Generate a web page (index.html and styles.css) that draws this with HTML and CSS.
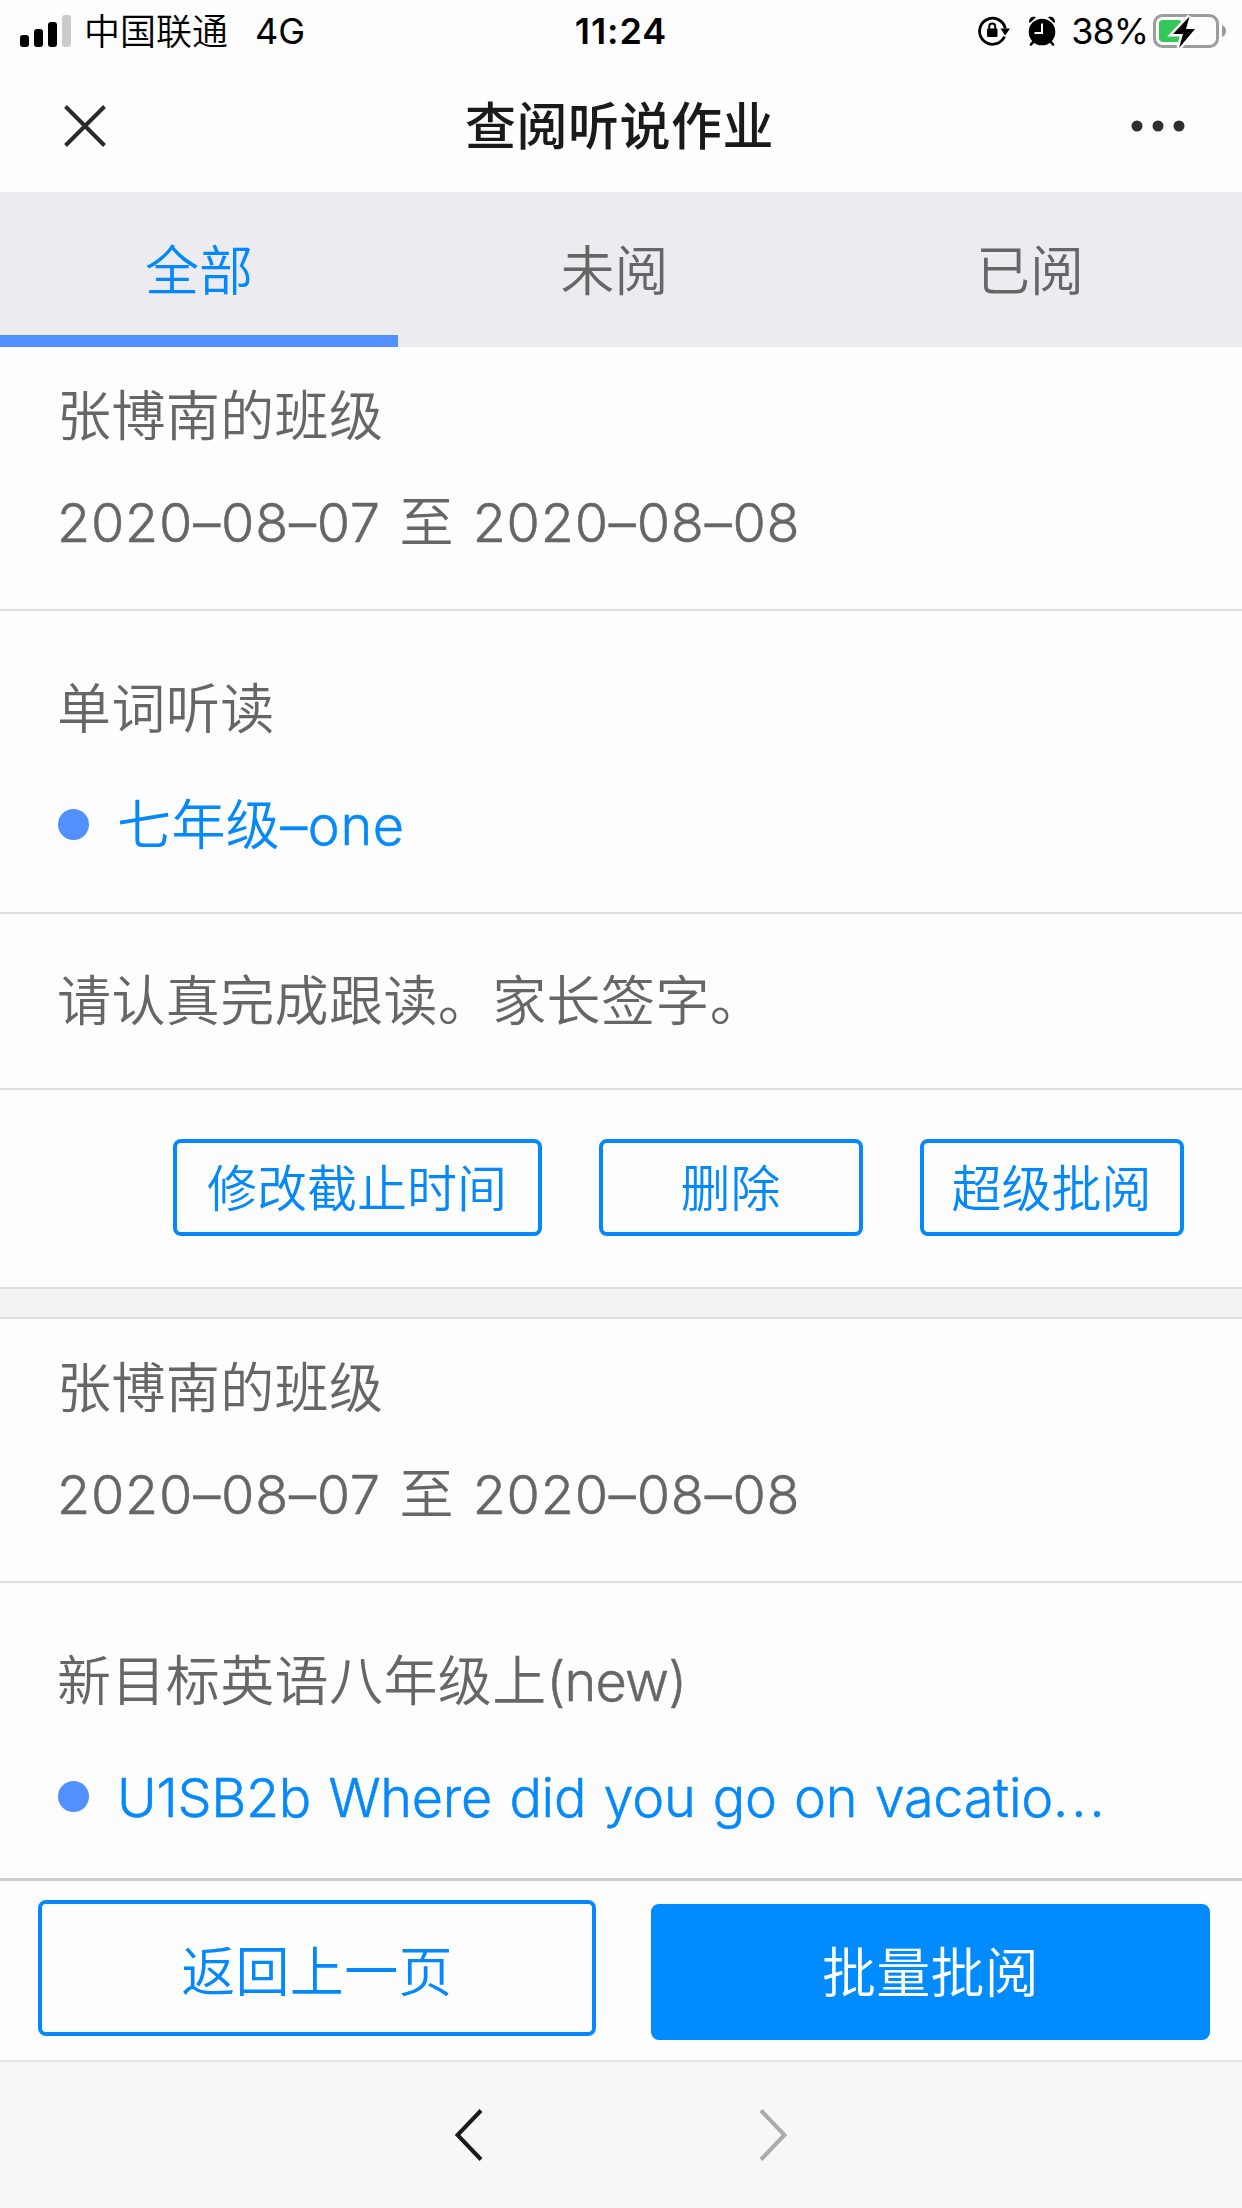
FILE: index.html
```html
<!DOCTYPE html>
<html lang="zh-CN">
<head>
<meta charset="utf-8">
<title>查阅听说作业</title>
<link rel="stylesheet" href="styles.css">
</head>
<body>
<div class="screen">
  <header class="status-bar">
    <div class="status-left">
      <svg class="signal" width="51" height="32" viewBox="0 0 51 32">
        <rect x="0" y="20" width="9" height="12" rx="3"/>
        <rect x="14" y="14" width="9" height="18" rx="3"/>
        <rect x="28" y="7" width="9" height="25" rx="3"/>
        <rect x="42" y="0" width="9" height="32" rx="3" fill="#cbcbcb"/>
      </svg>
      <span class="carrier">中国联通</span>
      <span class="network">4G</span>
    </div>
    <div class="clock">11:24</div>
    <div class="status-right">
      <svg class="rotation-lock" width="32" height="30" viewBox="0 0 32 30">
        <path d="M26.5 20.5A13 13 0 1 1 27.3 12.5" fill="none" stroke="#000" stroke-width="2.8"/>
        <path d="M22.5 12.5H32L27.2 19.5Z"/>
        <rect x="9" y="12.5" width="10.5" height="8.5" rx="1"/>
        <path d="M11.2 13v-2.4a3 3 0 0 1 6 0V13" fill="none" stroke="#000" stroke-width="2"/>
      </svg>
      <svg class="alarm" width="28" height="30" viewBox="0 0 28 30">
        <circle cx="14" cy="16" r="13.3"/>
        <path d="M1 6.5C1 2 4 0 8 1.2L2 6.8ZM27 6.5C27 2 24 0 20 1.2L26 6.8Z"/>
        <path d="M5.5 25.5L3 28.5M22.5 25.5L25 28.5" stroke="#000" stroke-width="2.6" stroke-linecap="round"/>
        <path d="M14 7.5V17H6.5" fill="none" stroke="#fdfdfd" stroke-width="2"/>
      </svg>
      <span class="percent">38%</span>
      <svg class="battery" width="73" height="38" viewBox="0 0 73 38">
        <rect x="1.5" y="3.5" width="63" height="31" rx="8" fill="none" stroke="#9c9c9c" stroke-width="3"/>
        <path d="M69 13Q73 14.500 73 19T69 25Z" fill="#9c9c9c"/>
        <rect x="6" y="8" width="23" height="22" rx="4" fill="#34c759"/>
        <path d="M36.500 4.500L20 22H30L26 36L42 17H33Z" fill="#000" stroke="#fdfdfd" stroke-width="5" paint-order="stroke"/>
      </svg>
    </div>
  </header>

  <nav class="title-bar">
    <svg class="close" width="42" height="42" viewBox="0 0 42 42">
      <path d="M1.500 1.500L40.500 40.500M40.500 1.500L1.500 40.500" stroke="#2b2b2b" stroke-width="4"/>
    </svg>
    <h1 class="title">查阅听说作业</h1>
    <svg class="more" width="54" height="12" viewBox="0 0 54 12">
      <circle cx="6" cy="6" r="5.500"/><circle cx="27" cy="6" r="5.500"/><circle cx="48" cy="6" r="5.500"/>
    </svg>
  </nav>

  <div class="tabs">
    <div class="tab tab-active">全部</div>
    <div class="tab">未阅</div>
    <div class="tab">已阅</div>
  </div>

  <main class="list">
    <article class="card">
      <section class="summary">
        <p class="line">张博南的班级</p>
        <p class="line dates">2020–08–07 <span class="han">至</span> 2020–08–08</p>
      </section>
      <section class="work">
        <p class="line">单词听读</p>
        <p class="line item"><span class="dot"></span><span class="link">七年级<span class="latin">–one</span></span></p>
      </section>
      <section class="note">
        <p class="line">请认真完成跟读。家长签字。</p>
      </section>
      <section class="actions">
        <button class="btn btn-wide">修改截止时间</button>
        <button class="btn">删除</button>
        <button class="btn">超级批阅</button>
      </section>
    </article>

    <article class="card">
      <section class="summary">
        <p class="line">张博南的班级</p>
        <p class="line dates">2020–08–07 <span class="han">至</span> 2020–08–08</p>
      </section>
      <section class="work">
        <p class="line">新目标英语八年级上<span class="latin tight">(new)</span></p>
        <p class="line item"><span class="dot"></span><span class="link unit">U1SB2b Where did you go on vacatio<span class="ellipsis">...</span></span></p>
      </section>
    </article>
  </main>

  <footer class="bottom-bar">
    <button class="big-btn outline">返回上一页</button>
    <button class="big-btn solid">批量批阅</button>
  </footer>

  <div class="browser-bar">
    <svg width="28" height="52" viewBox="0 0 28 52"><path d="M26 1.500L2.500 26L26 50.500" fill="none" stroke="#1a1a1a" stroke-width="4"/></svg>
    <svg width="28" height="52" viewBox="0 0 28 52"><path d="M2 1.500L25.500 26L2 50.500" fill="none" stroke="#aaaaaa" stroke-width="4"/></svg>
  </div>
</div>
</body>
</html>
```
FILE: styles.css
```css
* { box-sizing: border-box; }

body {
  margin: 0;
  background: #fdfdfd;
  color: #666;
  font-family: Inter, "Noto Sans CJK SC", sans-serif;
  font-size: 54px;
  font-weight: 350;
}

p, h1 { margin: 0; }

svg { display: block; flex: none; }

button {
  padding: 0;
  font: inherit;
  background: none;
  border: 4px solid #0589fa;
  border-radius: 8px;
  color: #0589fa;
}

.screen {
  width: 1242px;
  height: 2208px;
  display: flex;
  flex-direction: column;
  overflow: hidden;
}

/* Status bar */
.status-bar {
  height: 60px;
  display: grid;
  grid-template-columns: 1fr auto 1fr;
  align-items: center;
  padding: 2px 16px 0 20px;
  color: #000;
  font-size: 36px;
  line-height: 56px;
}

.status-left, .status-right { display: flex; align-items: center; }
.status-right { justify-content: flex-end; }
.signal { margin-right: 13px; }
.carrier { margin-right: 27px; position: relative; top: 1px; }
.network, .percent { font-weight: 400; }
.clock { font-weight: 600; letter-spacing: 0.9px; padding-right: 4px; }
.rotation-lock { margin-right: 18px; }
.alarm { margin-right: 15px; }
.percent { margin-right: 5px; letter-spacing: -1px; }

/* Title bar */
.title-bar {
  height: 132px;
  display: grid;
  grid-template-columns: 1fr auto 1fr;
  align-items: center;
  padding: 0 57px 0 64px;
}

.title {
  color: #1a1a1a;
  font-size: 51px;
  font-weight: 500;
  line-height: 76px;
  letter-spacing: 0.5px;
  padding: 2px 10px 0 0;
}

.more { justify-self: end; fill: #2f2f2f; }

/* Tabs */
.tabs {
  height: 155px;
  flex: none;
  display: flex;
  gap: 17.500px;
  background: #ebebf0;
  border-bottom: 2px solid #ebebeb;
}

.tab {
  width: 398px;
  height: 155px;
  line-height: 160px;
  text-align: center;
}

.tab-active { color: #0589fa; border-bottom: 12px solid #528fff; }

/* Homework cards */
.list { flex: 1; min-height: 0; overflow: hidden; }

.card {
  height: 942px;
  margin-bottom: 30px;
  border-bottom: 2px solid #dedede;
}

.card + .card { box-shadow: 0 -2px #e0e0e0, 0 -30px #f2f2f2; }

.line {
  height: 80px;
  line-height: 82px;
  letter-spacing: 0.4px;
  white-space: nowrap;
}

.summary, .work, .note {
  padding-left: 57px;
  border-bottom: 2px solid #dedede;
}

.summary { height: 264px; padding-top: 29px; display: grid; align-content: start; gap: 27px; }
.work { height: 303px; padding-top: 58px; display: grid; align-content: start; gap: 37px; }
.note { height: 176px; padding-top: 47px; }

/* Latin runs are a touch heavier than the light face */
.dates, .latin, .unit { font-weight: 300; -webkit-text-stroke: 0.5px currentColor; }
.dates { line-height: 80px; letter-spacing: 0.8px; word-spacing: 2.5px; }
.han { font-weight: 350; -webkit-text-stroke: 0; }
.latin { letter-spacing: 0.6px; }
.tight { letter-spacing: -0.8px; }
.item { display: flex; align-items: center; gap: 28px; }
.dot { width: 31px; height: 31px; margin: -3px 0 0 1px; border-radius: 50%; background: #528fff; }
.link { color: #0589fa; }
.unit { letter-spacing: -0.3px; word-spacing: 2.5px; }
.ellipsis { letter-spacing: 3px; }

.actions {
  display: flex;
  justify-content: flex-end;
  gap: 57px;
  padding: 49px 58px 0 0;
}

.btn {
  width: 264px;
  height: 97px;
  padding: 4px 1px 0 0;
  font-size: 50px;
  line-height: 85px;
}

.btn-wide { width: 369px; }

/* Fixed actions */
.bottom-bar {
  height: 182px;
  flex: none;
  display: flex;
  gap: 55px;
  padding: 19px 31px 0 38px;
  border-top: 3px solid #ccc;
}

.big-btn { width: 558px; height: 136px; padding-top: 10px; line-height: 118px; letter-spacing: 0.3px; }
.solid { width: 559px; margin-top: 4px; padding-top: 3px; background: #008cff; border-color: #008cff; color: #fff; }

.browser-bar {
  height: 148px;
  flex: none;
  display: flex;
  justify-content: center;
  gap: 276px;
  padding-top: 47px;
  background: #f7f7f7;
  border-top: 2px solid #e3e3e3;
}
```
